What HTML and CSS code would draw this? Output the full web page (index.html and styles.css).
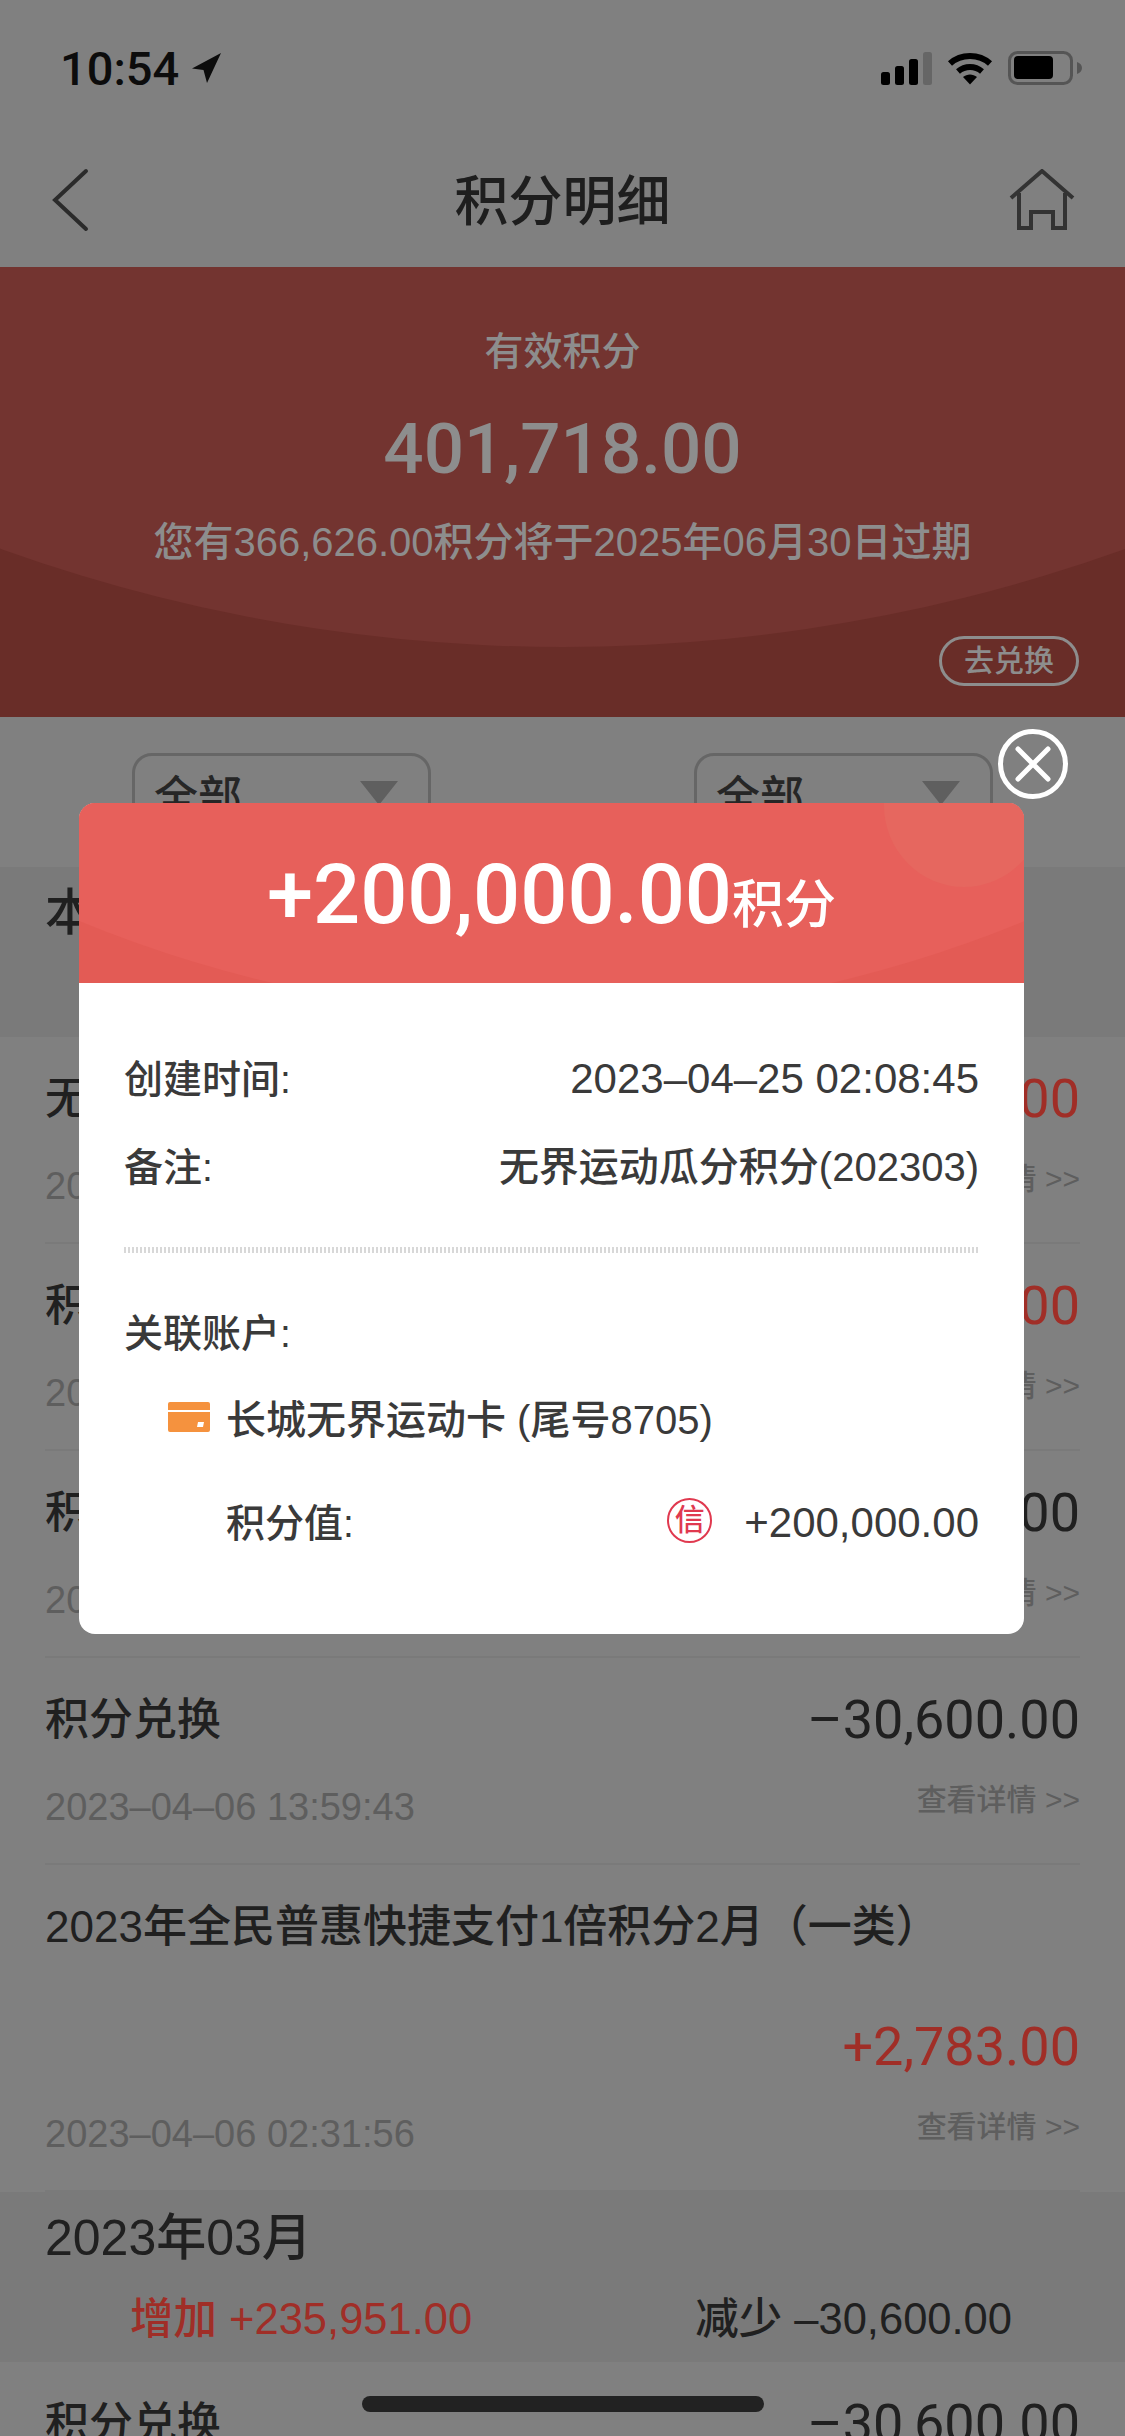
FILE: index.html
```html
<!DOCTYPE html>
<html lang="zh-CN">
  <head>
    <meta charset="UTF-8" />
    <meta name="viewport" content="width=device-width, initial-scale=1.0" />
    <title>积分明细</title>
    <link rel="stylesheet" href="styles.css">
  </head>
  <body>
    <div class="tela">
      <div class="statusBar">
        <div class="hora">
          <span>10:54</span>
          <svg class="seta" viewBox="0 0 32 32"><path d="M31 1 2 16.500 13.500 18 17 31Z" /></svg>
        </div>
        <div class="statusIcones">
          <svg class="sinal" viewBox="0 0 51 33">
            <rect x="0" y="20" width="9" height="13" rx="2.500" />
            <rect x="14" y="14" width="9" height="19" rx="2.500" />
            <rect x="28" y="7" width="9" height="26" rx="2.500" />
            <rect class="sinalOff" x="42" y="0" width="9" height="33" rx="2.500" />
          </svg>
          <svg class="wifi" viewBox="0 0 46 34">
            <path class="wifiArco" d="M3 12.500C14 2.500 32 2.500 43 12.500" />
            <path class="wifiArco" d="M11 20.500C18 14.500 28 14.500 35 20.500" />
            <path d="M16 26C20 22.500 26 22.500 30 26L23 33.500Z" />
          </svg>
          <svg class="bateria" viewBox="0 0 74 34">
            <rect class="bateriaBorda" x="1.500" y="1.500" width="62" height="31" rx="8" />
            <rect x="6" y="5" width="39" height="23" rx="4" />
            <path class="bateriaPonta" d="M69 11C72 12 74 14 74 17C74 20 72 22 69 23Z" />
          </svg>
        </div>
      </div>

      <div class="nav">
        <svg class="voltar" viewBox="0 0 66 64" preserveAspectRatio="xMinYMid"><path d="M36 3 5 32 36 61" /></svg>
        <div class="navTitulo">积分明细</div>
        <svg class="casa" viewBox="0 0 66 62">
          <path d="M2 29 33 2 64 29" />
          <path d="M10 24V59H22V43H44V59H56V24" />
        </svg>
      </div>

      <div class="hero">
        <div class="heroLabel">有效积分</div>
        <div class="heroValor">401,718.00</div>
        <div class="heroAviso">您有366,626.00积分将于2025年06月30日过期</div>
        <div class="heroBotao">去兑换</div>
      </div>

      <div class="filtros">
        <div class="select"><span>全部</span><i class="triangulo"></i></div>
        <div class="select"><span>全部</span><i class="triangulo"></i></div>
      </div>

      <div class="secao">
        <div class="secaoTitulo">本月</div>
        <div class="secaoResumo">
          <span class="vermelho">增加 +200,000.00</span>
          <span>减少 –30,600.00</span>
        </div>
      </div>

      <div class="item">
        <div class="itemTopo">
          <div class="itemTitulo">无界运动瓜分积分</div>
          <div class="itemValor vermelho">+200,000.00</div>
        </div>
        <div class="itemBase">
          <div class="itemData">2023–04–25 02:08:45</div>
          <div class="itemLink">查看详情 &gt;&gt;</div>
        </div>
      </div>
      <div class="item">
        <div class="itemTopo">
          <div class="itemTitulo">积分奖励</div>
          <div class="itemValor vermelho">+3,100.00</div>
        </div>
        <div class="itemBase">
          <div class="itemData">2023–04–20 02:31:56</div>
          <div class="itemLink">查看详情 &gt;&gt;</div>
        </div>
      </div>
      <div class="item">
        <div class="itemTopo">
          <div class="itemTitulo">积分兑换</div>
          <div class="itemValor">–30,600.00</div>
        </div>
        <div class="itemBase">
          <div class="itemData">2023–04–12 13:59:43</div>
          <div class="itemLink">查看详情 &gt;&gt;</div>
        </div>
      </div>
      <div class="item">
        <div class="itemTopo">
          <div class="itemTitulo">积分兑换</div>
          <div class="itemValor">–30,600.00</div>
        </div>
        <div class="itemBase">
          <div class="itemData">2023–04–06 13:59:43</div>
          <div class="itemLink">查看详情 &gt;&gt;</div>
        </div>
      </div>
      <div class="item">
        <div class="itemTopo">
          <div class="itemTitulo">2023年全民普惠快捷支付1倍积分2月（一类）</div>
          <div class="itemValor vermelho">+2,783.00</div>
        </div>
        <div class="itemBase">
          <div class="itemData">2023–04–06 02:31:56</div>
          <div class="itemLink">查看详情 &gt;&gt;</div>
        </div>
      </div>

      <div class="secao secaoMes">
        <div class="secaoTitulo">2023年03月</div>
        <div class="secaoResumo">
          <span class="vermelho">增加 +235,951.00</span>
          <span>减少 –30,600.00</span>
        </div>
      </div>

      <div class="item">
        <div class="itemTopo">
          <div class="itemTitulo">积分兑换</div>
          <div class="itemValor">–30,600.00</div>
        </div>
      </div>

      <div class="fundoModal">
        <div class="modal">
          <div class="fechar">
            <svg viewBox="0 0 70 70">
              <circle cx="35" cy="35" r="32.500" />
              <path d="M20 20 50 50M50 20 20 50" />
            </svg>
          </div>
          <div class="modalTopo">
            <span class="modalValor">+200,000.00</span><span class="modalUnidade">积分</span>
          </div>
          <div class="modalCorpo">
            <div class="linha">
              <span>创建时间:</span>
              <span class="numero">2023–04–25 02:08:45</span>
            </div>
            <div class="linha linhaNota">
              <span>备注:</span>
              <span class="texto">无界运动瓜分积分(202303)</span>
            </div>
            <div class="pontilhado"></div>
            <div class="linha">关联账户:</div>
            <div class="linha linhaCartao">
              <svg class="cartao" viewBox="0 0 42 30">
                <path d="M2 0H40A2 2 0 0 1 42 2V8H0V2A2 2 0 0 1 2 0Z" />
                <path d="M0 10H42V28A2 2 0 0 1 40 30H2A2 2 0 0 1 0 28ZM30 20 29 25H35L36 20Z" />
              </svg>
              <span class="texto">长城无界运动卡 (尾号8705)</span>
            </div>
            <div class="linha linhaPontos">
              <span>积分值:</span>
              <div class="pontosValor">
                <span class="selo">信</span>
                <span class="numero">+200,000.00</span>
              </div>
            </div>
          </div>
        </div>
      </div>

      <div class="homeBar"></div>
    </div>
  </body>
</html>
```

FILE: styles.css
```css
* {
  box-sizing: border-box;
}
body {
  margin: 0;
  font-family: "Liberation Sans", "Noto Sans CJK SC", sans-serif;
  color: #202020;
}
.tela {
  position: relative;
  width: 1125px;
  height: 2436px;
  overflow: hidden;
  background-color: #808080;
}

/* barra de status */
.statusBar {
  display: flex;
  justify-content: space-between;
  align-items: flex-start;
  height: 133px;
  padding: 44px 43px 0 60px;
  color: #0c0c0c;
}
.hora {
  display: flex;
  align-items: center;
  gap: 11px;
  height: 48px;
  font-family: Roboto, sans-serif;
  font-size: 47px;
  font-weight: 500;
}
.seta {
  width: 32px;
  height: 32px;
  fill: #0c0c0c;
}
.statusIcones {
  display: flex;
  align-items: center;
  height: 48px;
}
.sinal {
  width: 51px;
  height: 33px;
  margin-right: 15px;
  fill: #000;
}
.sinalOff {
  fill: #666;
}
.wifi {
  width: 46px;
  height: 34px;
  margin-right: 15px;
  fill: #000;
}
.wifiArco {
  fill: none;
  stroke: #000;
  stroke-width: 6;
}
.bateria {
  width: 74px;
  height: 34px;
  fill: #000;
}
.bateriaBorda {
  fill: none;
  stroke: #555;
  stroke-width: 3;
}
.bateriaPonta {
  fill: #555;
}

/* topo */
.nav {
  display: flex;
  justify-content: space-between;
  align-items: center;
  height: 134px;
  padding: 0 50px;
}
.voltar {
  width: 66px;
  height: 64px;
  fill: none;
  stroke: #2b2b2b;
  stroke-width: 4;
  stroke-linecap: round;
}
.navTitulo {
  padding-bottom: 6px;
  font-size: 54px;
  font-weight: 500;
  color: #1e1e1e;
}
.casa {
  width: 66px;
  height: 62px;
  fill: none;
  stroke: #333;
  stroke-width: 4;
}

/* bloco vermelho */
.hero {
  position: relative;
  display: flex;
  flex-direction: column;
  align-items: center;
  height: 450px;
  padding-top: 58px;
  overflow: hidden;
  background-color: #692d28;
  color: #8d8d8d;
}
.hero::before {
  content: "";
  position: absolute;
  left: 50%;
  top: -2940px;
  width: 3320px;
  height: 3320px;
  margin-left: -1660px;
  border-radius: 50%;
  background-color: #733430;
}
.hero > div {
  position: relative;
}
.heroLabel {
  font-size: 39px;
  font-weight: 500;
  line-height: 54px;
}
.heroValor {
  margin-top: 28px;
  font-family: Roboto, sans-serif;
  font-size: 71px;
  font-weight: 500;
  line-height: 84px;
}
.heroAviso {
  margin-top: 24px;
  font-size: 40px;
  font-weight: 500;
  line-height: 54px;
}
.hero .heroBotao {
  position: absolute;
  right: 46px;
  top: 369px;
  width: 140px;
  height: 50px;
  border: 3px solid #8d8d8d;
  border-radius: 25px;
  font-size: 30px;
  font-weight: 500;
  line-height: 43px;
  text-align: center;
}

/* filtros */
.filtros {
  display: flex;
  justify-content: space-between;
  height: 150px;
  padding: 36px 132px 0 132px;
}
.select {
  display: flex;
  justify-content: space-between;
  width: 299px;
  height: 100px;
  padding: 12px 30px 0 19px;
  border: 3px solid #666;
  border-radius: 20px;
  font-size: 44px;
  font-weight: 500;
  line-height: 60px;
  color: #262626;
}
.triangulo {
  width: 0;
  height: 0;
  margin-top: 13px;
  border-left: 19px solid transparent;
  border-right: 19px solid transparent;
  border-top: 24px solid #5f5f5f;
}

/* grupos e linhas */
.secao {
  display: flex;
  flex-direction: column;
  height: 170px;
  padding: 16px 45px 0;
  background-color: #7a7a7a;
}
.secaoTitulo {
  font-size: 50px;
  font-weight: 500;
  line-height: 60px;
}
.secaoResumo {
  display: flex;
  justify-content: space-between;
  margin-top: 21px;
  padding: 0 68px 0 85px;
  font-size: 43.500px;
  font-weight: 500;
  line-height: 60px;
}
.vermelho {
  color: #a02e27;
}
.item {
  margin: 0 45px;
  padding: 32px 0 39px;
  border-bottom: 2px solid #7a7a7a;
}
.itemTopo {
  display: flex;
  flex-wrap: wrap;
  justify-content: space-between;
  gap: 60px 0;
}
.itemTitulo {
  font-size: 44px;
  font-weight: 500;
  line-height: 60px;
}
.itemValor {
  margin-left: auto;
  font-family: Roboto, sans-serif;
  font-size: 54px;
  line-height: 60px;
}
.itemBase {
  display: flex;
  justify-content: space-between;
  align-items: flex-start;
  margin-top: 40px;
}
.itemData {
  font-size: 38px;
  line-height: 34px;
  color: #5e5e5e;
}
.itemLink {
  font-size: 30px;
  font-weight: 500;
  line-height: 20px;
  color: #5e5e5e;
}

/* modal */
.fundoModal {
  position: absolute;
  top: 0;
  left: 0;
  width: 100%;
  height: 100%;
  display: flex;
  align-items: flex-start;
  padding: 803px 0 0 79px;
}
.modal {
  position: relative;
  width: 945px;
  height: 831px;
  border-radius: 16px;
  background-color: #fff;
  color: #3a3a3a;
}
.fechar {
  position: absolute;
  top: -74px;
  right: -44px;
  width: 70px;
  height: 70px;
}
.fechar svg {
  display: block;
  fill: none;
  stroke: #fff;
  stroke-width: 5;
  stroke-linecap: round;
}
.modalTopo {
  position: relative;
  display: flex;
  justify-content: center;
  align-items: baseline;
  height: 180px;
  padding-top: 42px;
  overflow: hidden;
  border-radius: 16px 16px 0 0;
  background-color: #e35b55;
  color: #fff;
}
.modalTopo::before {
  content: "";
  position: absolute;
  left: 50%;
  top: -2258px;
  width: 2470px;
  height: 2470px;
  margin-left: -1235px;
  border-radius: 50%;
  background-color: #e7605b;
}
.modalTopo::after {
  content: "";
  position: absolute;
  right: -20px;
  top: -80px;
  width: 160px;
  height: 164px;
  border-radius: 50%;
  background-color: #e6675f;
}
.modalValor,
.modalUnidade {
  position: relative;
  z-index: 1;
}
.modalValor {
  font-family: Roboto, sans-serif;
  font-size: 83px;
  font-weight: 500;
  line-height: 100px;
}
.modalUnidade {
  font-size: 52px;
  font-weight: 500;
}
.modalCorpo {
  display: flex;
  flex-direction: column;
  padding: 63px 45px 0;
  font-size: 39px;
  font-weight: 500;
}
.linha {
  display: flex;
  justify-content: space-between;
  align-items: center;
  height: 60px;
}
.numero {
  margin-top: 6px;
  font-size: 42px;
}
.texto {
  font-size: 40px;
}
.linhaNota {
  margin-top: 28px;
}
.pontilhado {
  height: 6px;
  margin: 53px 0 47px;
  background-image: repeating-linear-gradient(90deg, #d8d8d8 0, #d8d8d8 2px, #fff 2px, #fff 4px);
}
.linhaCartao {
  justify-content: flex-start;
  margin-top: 27px;
  padding-left: 44px;
}
.cartao {
  width: 42px;
  height: 30px;
  margin-right: 16px;
  fill: #f5923e;
}
.linhaPontos {
  margin-top: 43px;
  padding-left: 102px;
}
.pontosValor {
  display: flex;
  align-items: center;
  gap: 32px;
}
.selo {
  width: 45px;
  height: 45px;
  border: 2px solid #e0394f;
  border-radius: 50%;
  font-size: 30px;
  line-height: 39px;
  text-align: center;
  color: #e0394f;
}

.homeBar {
  position: absolute;
  left: 362px;
  top: 2396px;
  width: 402px;
  height: 16px;
  border-radius: 8px;
  background-color: #222;
}
```
